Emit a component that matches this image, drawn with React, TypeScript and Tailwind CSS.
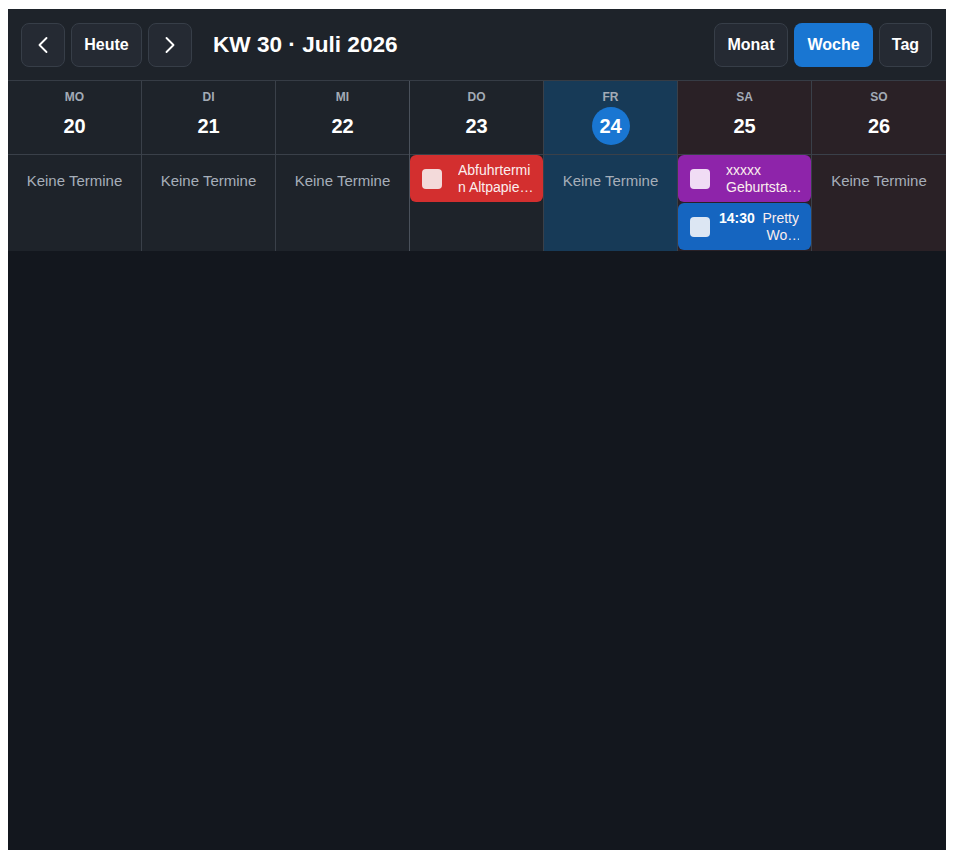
import { ChevronLeft, ChevronRight } from 'lucide-react';

type CalEvent = {
  title: string;
  time?: string;
  color: string;
  box: string;
};

type Day = {
  short: string;
  num: number;
  today?: boolean;
  weekend?: boolean;
  events: CalEvent[];
};

const days: Day[] = [
  { short: 'MO', num: 20, events: [] },
  { short: 'DI', num: 21, events: [] },
  { short: 'MI', num: 22, events: [] },
  {
    short: 'DO',
    num: 23,
    events: [{ title: 'Abfuhrtermin Altpapier Tonne', color: 'bg-[#d32f2f]', box: 'bg-[#f3dada]' }],
  },
  { short: 'FR', num: 24, today: true, events: [] },
  {
    short: 'SA',
    num: 25,
    weekend: true,
    events: [
      { title: 'xxxxx Geburtstag Feier', color: 'bg-[#8e24aa]', box: 'bg-[#f0dcf4]' },
      { title: 'Pretty Woman', time: '14:30', color: 'bg-[#1565c0]', box: 'bg-[#dce6f3]' },
    ],
  },
  { short: 'SO', num: 26, weekend: true, events: [] },
];

const EventCard = ({ ev }: { ev: CalEvent }) => (
  <div className={`${ev.color} h-[47px] rounded-md flex items-center pl-3 pr-[9px] text-[#fbeeee]`}>
    <div className={`${ev.box} w-5 h-5 rounded shrink-0`} />
    {ev.time ? (
      <div className="flex items-start ml-[9px] mr-[3px] gap-[6px] min-w-0 flex-1">
        <span className="text-[14px] font-bold leading-[17px] shrink-0 text-white">{ev.time}</span>
        <span className="text-[14px] leading-[17px] text-right flex-1 min-w-0 break-words line-clamp-2">
          {ev.title}
        </span>
      </div>
    ) : (
      <span className="ml-4 text-[14px] leading-[17px] min-w-0 flex-1 break-words line-clamp-2">
        {ev.title}
      </span>
    )}
  </div>
);

const App = () => {
  return (
    <div className="bg-white min-h-screen pt-[9px] pl-2 pr-[9px] font-['Liberation_Sans',Arial,sans-serif]">
      <div className="bg-[#13171e] h-[841px] flex flex-col">
        {/* Toolbar */}
        <div className="h-[72px] bg-[#1e232a] border-b border-[#363c45] flex items-center justify-between pl-[13px] pr-[14px]">
          <div className="flex items-center gap-[6px]">
            <button className="w-11 h-11 rounded-lg border border-[#373e48] bg-[#252a33] flex items-center justify-center text-white">
              <ChevronLeft size={28} strokeWidth={1.6} />
            </button>
            <button className="h-11 w-[71px] rounded-lg border border-[#373e48] bg-[#252a33] text-white text-[16px] font-bold">
              Heute
            </button>
            <button className="w-11 h-11 rounded-lg border border-[#373e48] bg-[#252a33] flex items-center justify-center text-white">
              <ChevronRight size={28} strokeWidth={1.6} />
            </button>
            <h1 className="ml-[15px] text-white text-[22.6px] font-bold">KW 30 · Juli 2026</h1>
          </div>
          <div className="flex items-center gap-[6px]">
            <button className="h-11 w-[74px] rounded-lg border border-[#373e48] bg-[#252a33] text-white text-[16px] font-bold">
              Monat
            </button>
            <button className="h-11 w-[79px] rounded-lg bg-[#1976d2] text-white text-[16px] font-bold">
              Woche
            </button>
            <button className="h-11 w-[53px] rounded-lg border border-[#373e48] bg-[#252a33] text-white text-[16px] font-bold">
              Tag
            </button>
          </div>
        </div>

        {/* Week grid */}
        <div className="grid grid-cols-7">
          {days.map((d, i) => {
            const bg = d.today ? 'bg-[#173a57]' : d.weekend ? 'bg-[#2a2126]' : 'bg-[#1e232a]';
            const divider = i === 2 ? 'border-r border-[#4a515b]' : i < 6 ? 'border-r border-[#3a4049]' : '';
            return (
              <div key={d.short} className={`${bg} flex flex-col ${divider}`}>
                <div className="h-[74px] border-b border-[#3a4049] flex flex-col items-center pt-2">
                  <span className="text-[12px] font-bold text-[#a3abb6] leading-4">{d.short}</span>
                  {d.today ? (
                    <span className="mt-[2px] w-[38px] h-[38px] rounded-full bg-[#1976d2] flex items-center justify-center text-white text-[20px] font-bold">
                      {d.num}
                    </span>
                  ) : (
                    <span className="mt-[9px] text-white text-[20px] font-bold leading-6">{d.num}</span>
                  )}
                </div>
                <div className="h-[96px] flex flex-col gap-px">
                  {d.events.length === 0 ? (
                    <span className="text-center text-[15px] text-[#a6aeb9] pt-[15px]">Keine Termine</span>
                  ) : (
                    d.events.map((ev) => <EventCard key={ev.title} ev={ev} />)
                  )}
                </div>
              </div>
            );
          })}
        </div>
      </div>
    </div>
  );
};

export default App;
